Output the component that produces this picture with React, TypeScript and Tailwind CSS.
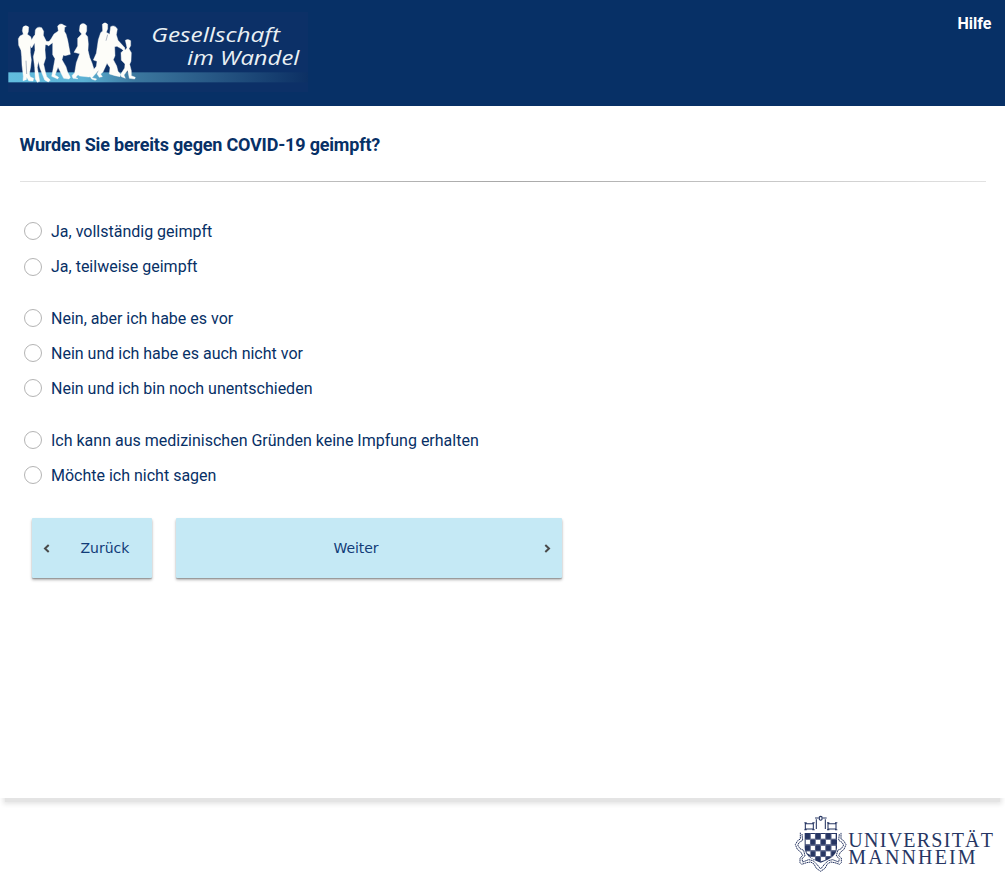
import React from "react";

const groups: string[][] = [
  ["Ja, vollständig geimpft", "Ja, teilweise geimpft"],
  ["Nein, aber ich habe es vor", "Nein und ich habe es auch nicht vor", "Nein und ich bin noch unentschieden"],
  ["Ich kann aus medizinischen Gründen keine Impfung erhalten", "Möchte ich nicht sagen"],
];

function BrandLogo() {
  return (
    <svg className="block h-[106px] w-[320px]" viewBox="0 0 960 318" role="img" aria-label="Gesellschaft im Wandel">
      <defs>
        <linearGradient id="band" x1="0" x2="1" y1="0" y2="0">
          <stop offset="0" stopColor="#62bddf" />
          <stop offset="0.25" stopColor="#5cb2d4" />
          <stop offset="0.42" stopColor="#3c789f" />
          <stop offset="0.72" stopColor="#245381" />
          <stop offset="1" stopColor="#0c3064" />
        </linearGradient>
      </defs>
      <rect x="24" y="36" width="900" height="240" fill="#0c3067" />
      <rect x="25" y="217" width="899" height="30" fill="url(#band)" />
      <g fill="#fdfdf9" stroke="#fdfdf9" strokeWidth="1.2" strokeLinejoin="round">
        <path d="M69 81 Q77 73 86 81 L85 95 L82 103 L92 110 L96 123 L104 119 L103 129 L91 137 L91 158 L94 180 L92 200 L88 222 L91 231 L101 235 L99 243 L86 242 L80 232 L79 239 L69 242 L70 229 L66 196 L65 170 L63 151 L56 136 L55 116 L60 108 L70 103 L67 92 Z" />
        <path d="M106 90 Q111 78 125 83 L131 94 L130 106 L139 124 L152 125 L148 135 L136 134 L135 150 L137 174 L131 193 L136 215 L140 230 L151 240 L145 246 L134 240 L120 205 L115 184 L112 203 L119 244 L112 247 L106 237 L104 202 L100 170 L105 151 L104 128 L95 144 L88 132 L101 109 L105 104 Z" />
        <path d="M173 78 Q182 67 192 76 L199 79 L194 82 L193 94 L198 102 L203 120 L211 163 L195 167 L190 165 L186 179 L198 200 L203 217 L211 232 L207 237 L191 235 L174 202 L165 225 L176 232 L173 237 L155 229 L157 220 L165 176 L158 164 L158 128 L145 138 L141 132 L153 117 L162 102 L175 93 Z" />
        <path d="M240 76 Q249 65 260 77 L260 93 L256 102 L263 110 L265 132 L264 151 L269 172 L276 189 L282 208 L278 229 L266 231 L239 228 L234 224 L227 232 L234 236 L219 235 L216 227 L224 218 L229 188 L239 161 L222 157 L233 138 L233 115 L245 102 L238 93 Z" />
        <path d="M307 73 Q315 64 323 73 L323 86 L319 97 L329 103 L332 80 Q344 73 352 87 L349 104 L354 121 L375 144 L372 151 L351 139 L344 140 L345 167 L340 179 L350 198 L354 214 L362 223 L360 230 L345 227 L328 222 L330 203 L321 190 L309 216 L302 222 L307 230 L298 232 L291 222 L296 211 L276 233 L290 237 L286 241 L275 237 L268 225 L289 199 L291 184 L280 180 L289 160 L295 119 L302 98 L308 93 Z" />
        <path d="M376 121 Q383 116 392 122 L392 137 L387 146 L394 158 L393 184 L389 193 L394 212 L394 227 L406 232 L404 237 L388 235 L383 211 L372 225 L376 235 L364 230 L362 223 L374 204 L375 192 L364 181 L363 158 L370 151 L365 145 L377 149 L381 143 Z" />
      </g>
      <path d="M78 182 L80 222 M323 104 L318 122" stroke="#31496f" strokeWidth="2" fill="none" opacity="0.6" />
      <g fill="#eaf0f4" fontFamily="'Open Sans', 'Noto Sans', sans-serif" fontStyle="italic" fontWeight="500" fontSize="62">
        <text x="454" y="127" textLength="386" lengthAdjust="spacingAndGlyphs">Gesellschaft</text>
        <text x="561" y="195" textLength="337" lengthAdjust="spacingAndGlyphs">im Wandel</text>
      </g>
    </svg>
  );
}

function UniversityLogo() {
  return (
    <svg className="block h-[66px] w-[210px]" viewBox="0 60 630 198" role="img" aria-label="Universität Mannheim">
      <g fill="none" stroke="#273663" strokeWidth="3.2">
        <path d="M61 101 H85 V117 H61 Z M58 98 h7 M82 98 h7 M58 119 h7 M82 119 h7" />
        <path d="M129 101 H153 V117 H129 Z M126 98 h7 M150 98 h7 M126 119 h7 M150 119 h7" />
        <path d="M94 117 V88 M90 84 H101 M113 84 H125 M121 88 V117 M103 81 Q107 77 111 81 V88 Q107 93 103 88 Z" />
      </g>
      <g fill="none" stroke="#273663" strokeWidth="3" strokeDasharray="5 1.5">
        <path d="M46 128 V147 L38 152 L31 164 L37 178 L48 187 L53 197 L45 204 L45 218 L50 223 L65 218 L77 216 L87 222 L94 235 L107 244 L120 235 L127 222 L137 216 L149 218 L164 223 L169 218 L169 204 L161 197 L166 187 L177 178 L183 164 L176 152 L168 147 V128" />
        <path d="M51 132 L53 151 L43 157 L38 165 L45 176 L56 181 L60 198 L51 206 L53 216 L71 209 L84 212 L95 222 L107 237 L119 222 L130 212 L143 209 L161 216 L163 206 L154 198 L158 181 L169 176 L176 165 L171 157 L161 151 L163 132" />
      </g>
      <path d="M59 129 H156 V174 Q154 203 107 218 Q60 203 59 174 Z" fill="#273663" />
      <g fill="#fff">
        <path d="M77 132 h13 v14 h-13Z M108 132 h13 v14 h-13Z M139 132 h13 v14 h-13Z" />
        <path d="M62 149 h13 v14 h-13Z M92 149 h14 v14 h-14Z M123 149 h14 v14 h-14Z" />
        <path d="M77 167 h13 v14 h-13Z M108 167 h13 v14 h-13Z M139 167 h13 v14 h-13Z" />
        <path d="M65 184 h11 v11 l-11 -6Z M92 184 h14 v14 h-14Z M123 184 h14 v14 h-14Z" />
        <path d="M78 201 h12 v8 l-12 -5Z M108 201 h13 v9 l-13 4Z" />
      </g>
      <path d="M76 130 V205 M91 130 V211 M107 130 V215 M122 130 V211 M138 130 V203 M60 148 H156 M60 165 H156 M61 183 H154 M69 200 H145" fill="none" stroke="#8b93ad" strokeWidth="1.5" />
      <g fill="#273663" fontFamily="'Liberation Serif', serif" fontSize="60">
        <text x="190" y="171" textLength="434">UNIVERSITÄT</text>
        <text x="190" y="223" textLength="382">MANNHEIM</text>
      </g>
    </svg>
  );
}

function Chevron({ flip = false }: { flip?: boolean }) {
  return (
    <svg className={flip ? "h-[9px] w-[7px] rotate-180" : "h-[9px] w-[7px]"} viewBox="0 0 7 9" fill="none" stroke="#4a4a4a" strokeWidth="2">
      <path d="M5.7 1 L2 4.5 L5.7 8" />
    </svg>
  );
}

const buttonClass =
  "flex h-[60px] items-center rounded-[1px] bg-[#c5e9f5] font-['DejaVu_Sans',sans-serif] text-sm text-[#123c78] shadow-[0_2px_3px_rgba(0,0,0,0.3),0_1px_1px_rgba(0,0,0,0.2)]";

export default function App() {
  return (
    <div className="flex h-[884px] w-full flex-col overflow-hidden bg-white font-[Roboto,sans-serif] text-[#073066]">
      <header className="flex h-[106px] shrink-0 items-start justify-between bg-[#073066]">
        <BrandLogo />
        <a className="pt-3 pr-[13.5px] text-base font-bold text-white">Hilfe</a>
      </header>
      <main className="h-[692px] shrink-0 pr-[19px] pl-5">
        <h1 className="-ml-[0.5px] pt-[25px] text-lg leading-7 font-bold tracking-[-0.19px]">Wurden Sie bereits gegen COVID-19 geimpft?</h1>
        <div className="mt-[22px] h-px bg-linear-to-r from-[#e2e2e2] via-[#a8a8a8] to-[#e2e2e2]" />
        <form className="pt-8">
          <div className="flex flex-col gap-[17px]">
            {groups.map((group) => (
              <div key={group[0]} className="group">
                {group.map((label) => (
                  <label key={label} className="group/row flex h-[35px] items-center gap-[9px] pl-1 text-base">
                    <input type="radio" name="vaccinated" className="mb-px size-[18px] appearance-none rounded-full border border-[#b4b4b4] bg-white group-first:group-last/row:mb-0" />
                    <span>{label}</span>
                  </label>
                ))}
              </div>
            ))}
          </div>
          <div className="mt-[25px] flex gap-6 pl-3">
            <button type="button" className={buttonClass + " w-[120px] pl-[11px]"}>
              <Chevron />
              <span className="ml-[30.5px]">Zurück</span>
            </button>
            <button type="button" className={buttonClass + " w-[386px] pr-[11px]"}>
              <span className="flex-1 pr-2 tracking-[-0.1px]">Weiter</span>
              <Chevron flip />
            </button>
          </div>
        </form>
      </main>
      <footer className="flex flex-1 flex-col items-end">
        <div className="h-3 w-full overflow-hidden">
          <div className="mx-[5px] -mt-[3px] h-[7px] bg-[#e4e4e4] shadow-[0_0_5px_2px_#e4e4e4]" />
        </div>
        <div className="pr-[10px]">
          <UniversityLogo />
        </div>
      </footer>
    </div>
  );
}
